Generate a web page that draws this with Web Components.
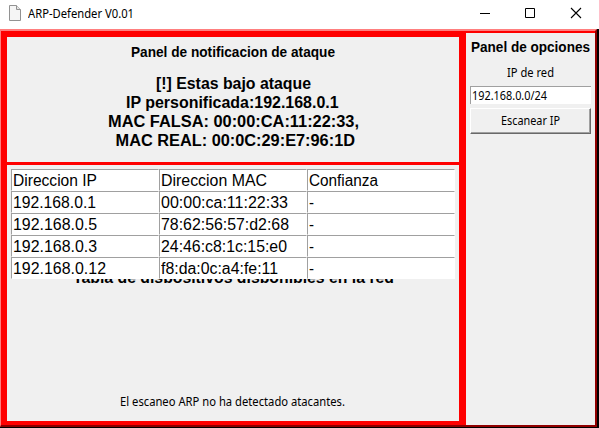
<!DOCTYPE html>
<html lang="es"><head><meta charset="utf-8"><title>ARP-Defender V0.01</title>
<style>html,body{margin:0;background:#fff;overflow:hidden}</style></head><body>
<app-window></app-window>
<script>
const define=(name,html,ready)=>customElements.define(name,class extends HTMLElement{
  constructor(){super();this.attachShadow({mode:'open'}).innerHTML=html;}
  connectedCallback(){if(ready)ready.call(this);}
});

// Single line of text condensed or widened to the width attribute.
customElements.define('fit-text',class extends HTMLElement{
  constructor(){super();this.attachShadow({mode:'open'}).innerHTML='<style>:host{display:block;white-space:pre}span{display:inline-block;transform-origin:0 0}</style><span><slot></slot></span>';}
  connectedCallback(){
    const s=this.shadowRoot.querySelector('span'),w=+this.getAttribute('width');
    if(!w)return;
    const n=s.getBoundingClientRect().width;
    s.style.transform='scaleX('+w/n+')';
    s.style.marginRight=(w-n)+'px';
  }
});

define('title-bar',`<style>
:host{display:flex;height:29px;background:#fff;align-items:center;font:12px/16px "Noto Sans",sans-serif;color:#000;box-sizing:border-box;padding-left:8px}
.doc{width:14px;height:18px;margin-right:6px;margin-top:-3px}
.name{flex:1;margin-top:-1px}.controls{display:flex}.controls svg{width:46px;height:29px;display:block}
</style>
<svg class="doc" viewBox="0 0 14 18"><path d="M1.5 1.5h7l4 4v11h-11z" fill="#f5f5f5" stroke="#929292"/><path d="M8.5 1.5v4h4" fill="#e4e4e4" stroke="#929292"/></svg>
<fit-text class="name" width="106">ARP-Defender V0.01</fit-text>
<div class="controls">
<svg viewBox="0 0 46 29"><path d="M19 13.5h10" stroke="#000"/></svg>
<svg viewBox="0 0 46 29"><path d="M18.5 8.5h9v9h-9z" fill="none" stroke="#000"/></svg>
<svg viewBox="0 0 46 29"><path d="M18 8l10 10M28 8L18 18" stroke="#000" stroke-width="1.1"/></svg>
</div>`);

define('alert-panel',`<style>
:host{display:flex;flex-direction:column;align-items:center;height:125px;background:#f0f0f0;font-family:"Liberation Sans",Arial,sans-serif;font-weight:bold;color:#000}
.head{font-size:14px;line-height:16px;margin-top:7px;margin-bottom:14px}
.line{font-size:16px;line-height:19px}
.shift{padding-left:3px}
</style>
<fit-text class="head" width="204">Panel de notificacion de ataque</fit-text>
<fit-text class="line" width="155">[!] Estas bajo ataque</fit-text>
<fit-text class="line shift" width="217">IP personificada:192.168.0.1 </fit-text>
<fit-text class="line" width="251">MAC FALSA: 00:00:CA:11:22:33,</fit-text>
<fit-text class="line" width="244"> MAC REAL: 00:0C:29:E7:96:1D</fit-text>`);

define('table-cell',`<style>
:host{display:block;box-sizing:border-box;height:22px;background:#fff;border:1px solid;border-color:#a0a0a0 #fff #fff #a0a0a0;padding-left:1px;font:16px/22px "Liberation Sans",Arial,sans-serif;color:#000}
</style><slot></slot>`);

define('device-table',`<style>
:host{display:grid;grid-template-columns:repeat(3,148px);margin:4px 4px 0;background:#fff;position:relative;z-index:1}
</style>`,function(){
  const rows=[['Direccion IP',84,'Direccion MAC',106,'Confianza',69],['192.168.0.1',83,'00:00:ca:11:22:33',127,'-',5],['192.168.0.5',84,'78:62:56:57:d2:68',128,'-',5],['192.168.0.3',84,'24:46:c8:1c:15:e0',126,'-',5],['192.168.0.12',93,'f8:da:0c:a4:fe:11',117,'-',5]];
  for(const r of rows)for(let i=0;i<6;i+=2){
    const c=document.createElement('table-cell');
    c.innerHTML='<fit-text width="'+r[i+1]+'">'+r[i]+'</fit-text>';
    this.shadowRoot.append(c);
  }
});

define('devices-panel',`<style>
:host{display:flex;flex-direction:column;height:256px;background:#f0f0f0;color:#000}
.caption{font:bold 16px/19px "Liberation Sans",Arial,sans-serif;align-self:center;height:15px;overflow:hidden;margin-top:-11px}
.status{font:12px/16px "Noto Sans",sans-serif;align-self:center;margin-top:auto;margin-bottom:11px;padding-right:1px}
</style>
<device-table></device-table>
<fit-text class="caption" width="321">Tabla de dispositivos disponibles en la red</fit-text>
<fit-text class="status" width="225">El escaneo ARP no ha detectado atacantes.</fit-text>`);

define('options-panel',`<style>
:host{display:flex;flex-direction:column;background:#f0f0f0;color:#000;font:12px/16px "Noto Sans",sans-serif;padding:0 4px}
.head{font:bold 14px/16px "Liberation Sans",Arial,sans-serif;align-self:center;margin-top:6px}
.label{align-self:center;margin:10px 0 5px}
.field{height:18px;box-sizing:border-box;background:#fff;border:solid #a0a0a0;border-width:1px 0 0 1px;padding-left:1px;line-height:18px}
.button{height:26px;box-sizing:border-box;margin-top:4px;border:1px solid;border-color:#fff #696969 #696969 #fff;box-shadow:inset -1px -1px #a0a0a0;display:flex;justify-content:center;align-items:center}
</style>
<fit-text class="head" width="119">Panel de opciones</fit-text>
<fit-text class="label" width="47">IP de red</fit-text>
<div class="field"><fit-text width="75">192.168.0.0/24</fit-text></div>
<div class="button"><fit-text width="59">Escanear IP</fit-text></div>`);

define('app-window',`<style>
:host{display:flex;flex-direction:column;width:599px;height:428px;background:#fff}
.black{flex:1;display:flex;background:#000;padding:0 2px 1px 0}
.frame{flex:1;display:grid;grid-template-columns:452px 129px;column-gap:7px;background:red;border:solid;border-width:2px 2px 2px 1px;border-color:#ff7f7f #900000 #900000 #ff7f7f;padding-left:6px}
.left{display:flex;flex-direction:column;gap:3px;padding:6px 0 4px}
options-panel{margin-top:2px}
</style>
<title-bar></title-bar>
<div class="black"><div class="frame"><div class="left"><alert-panel></alert-panel><devices-panel></devices-panel></div><options-panel></options-panel></div></div>`);
</script></body></html>
